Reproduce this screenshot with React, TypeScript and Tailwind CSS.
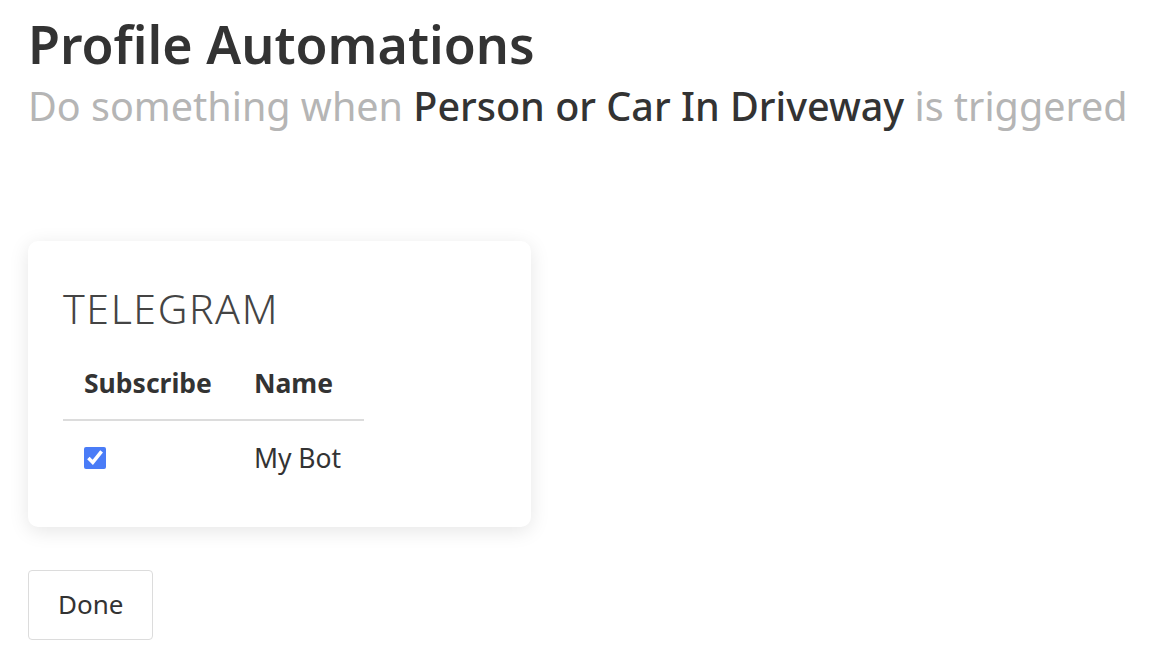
import React from "react";

const App = () => {
  return (
    <div className="min-h-screen bg-white px-[28px] pt-[13px] text-[#333] font-['Noto_Sans',sans-serif]">
      {/* Header */}
      <h1 className="text-[52px] font-semibold leading-[1.2] text-[#333]">Profile Automations</h1>
      <div className="mt-[8px] text-[39.5px] leading-[1.2] text-[#b5b5b5]">
        Do something when <span className="font-medium text-[#333]">Person or Car In Driveway</span> is triggered
      </div>

      {/* Card */}
      <div className="mt-[110px] w-[503px] rounded-[10px] bg-white px-[35px] pt-[43px] pb-[49px] shadow-[0_4px_20px_rgba(0,0,0,0.1)]">
        <div className="text-[41px] font-light tracking-[1.6px] text-[#444] leading-[1.2]">TELEGRAM</div>
        <table className="mt-[31px] border-collapse text-[26.5px] leading-[1.5]">
          <thead>
            <tr className="border-b-2 border-[#dcdcdc]">
              <th className="px-[21px] pb-[15px] text-left font-bold">Subscribe</th>
              <th className="pl-[21px] pr-[31px] pb-[15px] text-left font-bold">Name</th>
            </tr>
          </thead>
          <tbody>
            <tr>
              <td className="px-[21px] pt-[26px] align-top">
                <input type="checkbox" defaultChecked className="block h-[22px] w-[22px] accent-[#4a7cf7]" />
              </td>
              <td className="pl-[21px] pt-[18px] align-top">My Bot</td>
            </tr>
          </tbody>
        </table>
      </div>

      {/* Done */}
      <button className="mt-[43px] rounded-[4px] border border-[#dcdcdc] bg-white px-[29px] py-[13px] text-[26px] leading-[1.6] text-[#333]">
        Done
      </button>
    </div>
  );
};

export default App;
